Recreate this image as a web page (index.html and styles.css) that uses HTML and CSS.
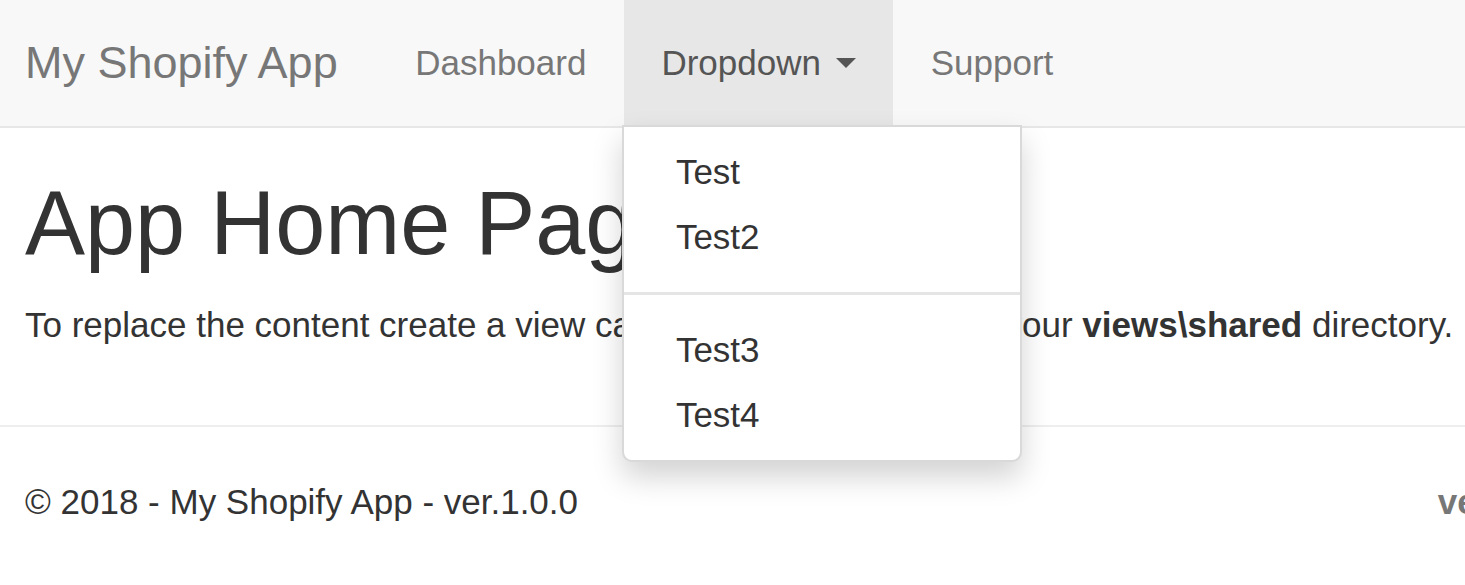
FILE: index.html
```html
<!DOCTYPE html>
<html lang="en">
<head>
<meta charset="utf-8">
<title>My Shopify App</title>
<link rel="stylesheet" href="styles.css">
</head>
<body>
<nav class="navbar">
  <a class="brand" href="#">My Shopify App</a>
  <ul class="nav">
    <li><a class="nav-link" href="#">Dashboard</a></li>
    <li class="dropdown open">
      <a class="nav-link active" href="#">Dropdown <span class="caret"></span></a>
      <ul class="dropdown-menu">
        <li><a href="#">Test</a></li>
        <li><a href="#">Test2</a></li>
        <li class="divider"></li>
        <li><a href="#">Test3</a></li>
        <li><a href="#">Test4</a></li>
      </ul>
    </li>
    <li><a class="nav-link" href="#">Support</a></li>
  </ul>
</nav>
<main class="content">
  <h1 class="title">App Home Page</h1>
  <p class="lead">To replace the content create a view called <b class="file">_Layout.cshtml</b> in your <b>views\shared</b> directory.</p>
  <hr class="rule">
  <footer class="footer">
    <p class="copy">&copy; 2018 - My Shopify App - ver.1.0.0</p>
    <span class="ver">ver.1.0.0</span>
  </footer>
</main>
</body>
</html>
```
FILE: styles.css
```css
* { box-sizing: border-box; }
html, body { margin: 0; padding: 0; }
body {
  font-family: "Liberation Sans", Arial, sans-serif;
  font-size: 35px;
  line-height: 50px;
  color: #333;
  background: #fff;
  overflow: hidden;
  width: 1465px;
  height: 585px;
}
a { text-decoration: none; }

.navbar {
  display: flex;
  align-items: stretch;
  height: 127.5px;
  background: #f8f8f8;
  border-bottom: 2.5px solid #e7e7e7;
}
.brand {
  display: block;
  padding: 37.5px 40px 37.5px 25px;
  font-size: 45px;
  line-height: 50px;
  color: #777;
}
.nav {
  display: flex;
  list-style: none;
  margin: 0;
  padding: 0;
}
.nav > li { position: relative; }
.nav-link {
  display: block;
  padding: 37.5px 37.5px;
  line-height: 50px;
  color: #777;
}
.nav-link.active {
  background: #e7e7e7;
  color: #555;
}
.caret {
  display: inline-block;
  width: 0;
  height: 0;
  margin-left: 5px;
  vertical-align: middle;
  border-top: 10px solid #555;
  border-left: 10px solid transparent;
  border-right: 10px solid transparent;
  position: relative;
  top: -2px;
}
.dropdown-menu {
  position: absolute;
  top: 125px;
  left: -1.5px;
  width: 400px;
  margin: 0;
  padding: 12.5px 0;
  list-style: none;
  background: #fff;
  border: 2.5px solid rgba(0,0,0,.15);
  border-radius: 0 0 10px 10px;
  box-shadow: 0 15px 30px rgba(0,0,0,.175);
  z-index: 10;
}
.dropdown-menu a {
  display: block;
  padding: 7.5px 51.5px;
  line-height: 50px;
  color: #333;
  white-space: nowrap;
}
.dropdown-menu .divider {
  height: 2.5px;
  margin: 22.5px 0;
  background: #e5e5e5;
}

.content { padding: 0 0 0 25px; }
.title {
  margin: 46px 0 27px;
  font-size: 90px;
  line-height: 99px;
  font-weight: 500;
  color: #333;
}
.lead { margin: 0; white-space: nowrap; }
.file { letter-spacing: 0.35px; }
.rule {
  margin: 75px 0 50px -25px;
  border: 0;
  border-top: 2.5px solid #eee;
  height: 0;
}
.footer {
  display: flex;
  align-items: baseline;
}
.copy { margin: 0; }
.ver {
  margin-left: auto;
  margin-right: -111px;
  font-weight: bold;
  color: #777;
  white-space: nowrap;
}
```
